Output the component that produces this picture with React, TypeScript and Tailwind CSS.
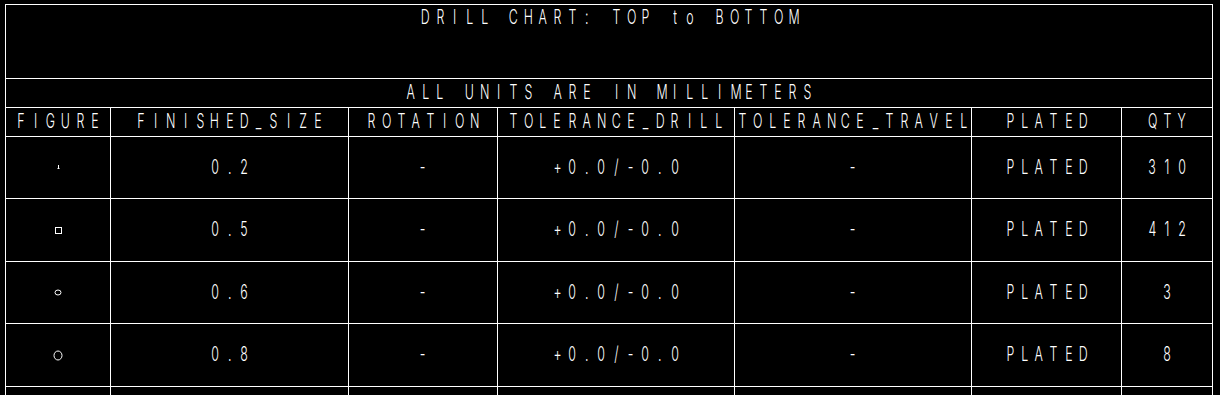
import React from "react";

// stroke-font look: every glyph gets the same cell, squeezed narrow
const Txt = ({ s }: { s: string }) => (
  <span className="inline-flex mb-[2px]">
    {s.split("").map((c, i) => (
      <span key={i} className="inline-block w-[14.7px] text-center">
        <span className="inline-block scale-x-[0.62]">{c === " " ? "\u00a0" : c}</span>
      </span>
    ))}
  </span>
);

const Figure = ({ kind }: { kind: number }) => {
  if (kind === 0)
    return (
      <svg width="5" height="5" viewBox="0 0 5 5" className="mt-[-2px]">
        <path d="M2.5 1 V4 M1.5 4.5 H3.5" stroke="white" strokeWidth="1" fill="none" />
      </svg>
    );
  if (kind === 1)
    return (
      <svg width="7" height="7" viewBox="0 0 7 7">
        <rect x="0.5" y="0.5" width="6" height="6" stroke="white" strokeWidth="1" fill="none" />
      </svg>
    );
  if (kind === 2)
    return (
      <svg width="8" height="7" viewBox="0 0 8 7">
        <ellipse cx="4" cy="3.5" rx="3" ry="2.5" stroke="white" strokeWidth="1" fill="none" />
      </svg>
    );
  return (
    <svg width="10" height="11" viewBox="0 0 10 11">
      <ellipse cx="5" cy="5.5" rx="4" ry="4.5" stroke="white" strokeWidth="1" fill="none" />
    </svg>
  );
};

const cols = "grid-cols-[105px_238px_149px_237px_237px_150px_91px]";
const cell = "flex items-center justify-center border-r border-b border-white";

const headers = ["FIGURE", "FINISHED_SIZE", "ROTATION", "TOLERANCE_DRILL", "TOLERANCE_TRAVEL", "PLATED", "QTY"];

const rows = [
  { size: "0.2", qty: "310", h: "h-[62px]" },
  { size: "0.5", qty: "412", h: "h-[63px]" },
  { size: "0.6", qty: "3", h: "h-[62px]" },
  { size: "0.8", qty: "8", h: "h-[63px]" },
];

export default function App() {
  return (
    <div
      className="w-[1220px] h-[395px] overflow-hidden bg-black text-white pl-[5px] pt-[4px] text-[20px] leading-none font-light antialiased"
      style={{ fontFamily: "Inter, Roboto, 'DejaVu Sans', sans-serif" }}
    >
      <div className="w-[1208px] border-l border-t border-white">
        <div className="h-[74px] flex justify-center items-start pt-[2px] border-r border-b border-white">
          <Txt s="DRILL CHART: TOP to BOTTOM" />
        </div>
        <div className="h-[29px] flex justify-center items-center border-r border-b border-white">
          <Txt s="ALL UNITS ARE IN MILLIMETERS" />
        </div>
        <div className={`grid ${cols}`}>
          {headers.map((h) => (
            <div key={h} className={`${cell} h-[29px]`}>
              <Txt s={h} />
            </div>
          ))}
          {rows.map((r, i) => (
            <React.Fragment key={i}>
              <div className={`${cell} ${r.h}`}>
                <Figure kind={i} />
              </div>
              <div className={`${cell} ${r.h}`}>
                <Txt s={r.size} />
              </div>
              <div className={`${cell} ${r.h}`}>
                <Txt s="-" />
              </div>
              <div className={`${cell} ${r.h}`}>
                <Txt s="+0.0/-0.0" />
              </div>
              <div className={`${cell} ${r.h}`}>
                <Txt s="-" />
              </div>
              <div className={`${cell} ${r.h}`}>
                <Txt s="PLATED" />
              </div>
              <div className={`${cell} ${r.h}`}>
                <Txt s={r.qty} />
              </div>
            </React.Fragment>
          ))}
          {headers.map((h) => (
            <div key={"x" + h} className={`${cell} h-[62px]`} />
          ))}
        </div>
      </div>
    </div>
  );
}
